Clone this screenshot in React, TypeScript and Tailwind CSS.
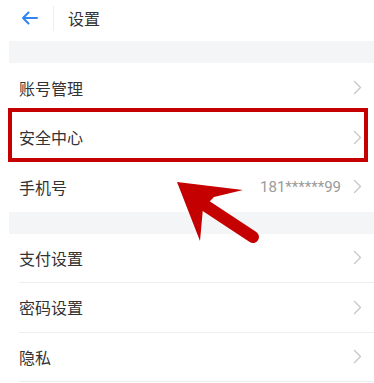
const font = { fontFamily: "'Noto Sans CJK SC', 'Noto Sans', sans-serif" };

function Chevron() {
  return (
    <svg width="9" height="15" viewBox="0 0 9 15" fill="none">
      <path d="M1.5 1.5l6 6-6 6" stroke="#c6c6c6" strokeWidth="1.3" strokeLinecap="round" strokeLinejoin="round" />
    </svg>
  );
}

function Row({ label, value, divider = true }: { label: string; value?: string; divider?: boolean }) {
  return (
    <div className="h-[49.5px] flex items-center pl-[10px]">
      <div className={`flex-1 h-full flex items-center pr-[12px] ${divider ? "border-b border-[#eeeeee]" : ""}`}>
        <span className="flex-1 text-[16px] text-[#333333]">{label}</span>
        {value && (
          <span className="text-[15px] text-[#9a9a9a] mr-[12px]" style={{ fontFamily: "'Roboto', 'Noto Sans', sans-serif" }}>
            {value}
          </span>
        )}
        <Chevron />
      </div>
    </div>
  );
}

export default function App() {
  return (
    <div className="relative w-[374px] h-[383px] bg-white overflow-hidden" style={font}>
      <div className="ml-[9px]">
        {/* header */}
        <div className="h-[41px] flex items-center pb-[5px]">
          <svg className="ml-[12px]" width="17" height="14" viewBox="0 0 17 14" fill="none">
            <path d="M16 7H2M7.5 1.5L2 7l5.5 5.5" stroke="#2f86f0" strokeWidth="2" strokeLinecap="round" strokeLinejoin="round" />
          </svg>
          <div className="ml-[15px] w-px h-[25px] bg-[#eeeeee]" />
          <span className="ml-[14px] text-[16px] text-[#333333]">设置</span>
        </div>
        <div className="h-[22px] bg-[#f4f5f7]" />
        <Row label="账号管理" divider={false} />
        <Row label="安全中心" divider={false} />
        <Row label="手机号" value="181******99" divider={false} />
        <div className="h-[22px] bg-[#f4f5f7]" />
        <Row label="支付设置" />
        <Row label="密码设置" />
        <Row label="隐私" />
      </div>

      {/* highlight box */}
      <div className="absolute left-[8px] top-[108px] w-[360px] h-[54px] border-[4px] border-[#c40000]" />

      {/* arrow */}
      <svg className="absolute left-0 top-0" width="374" height="383" viewBox="0 0 374 383">
        <line x1="206" y1="206" x2="253" y2="237" stroke="#c40000" strokeWidth="12" strokeLinecap="round" />
        <polygon points="177,182 243,190 214,197 203,208 200,241" fill="#c40000" />
      </svg>
    </div>
  );
}
